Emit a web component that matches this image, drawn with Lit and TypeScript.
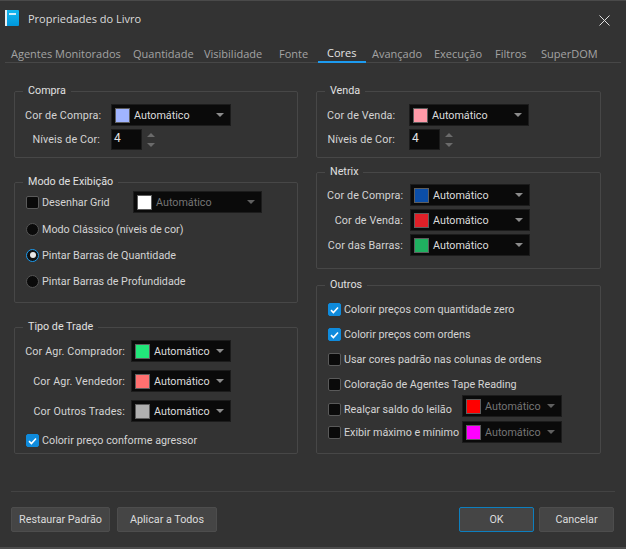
import { LitElement, html, css } from "lit";
import { customElement } from "lit/decorators.js";

const TABS: [string, number, number][] = [
  ["Agentes Monitorados", 122, 6],
  ["Quantidade", 70, 6],
  ["Visibilidade", 72, 7],
  ["Fonte", 49, 10],
  ["Cores", 48, 9],
  ["Avançado", 62, 6],
  ["Execução", 61, 6],
  ["Filtros", 46, 6],
  ["SuperDOM", 70, 6],
];

@customElement("app-root")
export class AppRoot extends LitElement {
  static styles = css`
    :host {
      display: block;
      width: 626px;
      height: 549px;
      box-sizing: border-box;
      background: #333333;
      border-top: 1px solid #4a4a4a;
      border-bottom: 2px solid #4c4c4c;
      font-family: Roboto, "Noto Sans", sans-serif;
      font-size: 10.75px;
      color: #d4d4d4;
      overflow: hidden;
    }
    * { box-sizing: border-box; }
    .titlebar { display: flex; align-items: center; height: 34px; padding: 0 16px 0 5px; font-family: "Open Sans", sans-serif; font-size: 11px; }
    .title { margin-left: 9px; flex: 1; color: #dcdcdc; }
    .close { display: block; margin-top: 4px; }
    .tabs { display: flex; height: 28px; margin: 0 5px; border-bottom: 1px solid #474747; padding-top: 10px; font-family: "Open Sans", sans-serif; font-size: 11px; }
    .tab { color: #a3a3a3; height: 18px; line-height: 18px; white-space: nowrap; }
    .tab.active { color: #e4e4e4; border-bottom: 2px solid #1d9bf0; line-height: 16px; }
    .body { display: flex; gap: 18px; padding: 20px 0 0 14px; height: 428px; }
    .col { display: flex; flex-direction: column; }
    .left { width: 284px; gap: 16px; }
    .right { width: 285px; }
    fieldset { margin: 0; padding: 0 10px; border: 1px solid #474747; border-radius: 2px; min-width: 0; }
    legend { margin-left: -2px; padding: 0 5px; line-height: 16px; height: 16px; color: #e0e0e0; }
    .compra { height: 75px; }
    .modo { height: 129px; }
    .tipo { height: 135px; }
    .netrix { height: 105px; margin-top: 6px; }
    .outros { height: 177px; margin-top: 8px; }
    .form { display: grid; align-items: center; padding-top: 5px; row-gap: 3px; column-gap: 11px; }
    .form.f75 { grid-template-columns: 75px auto; justify-content: start; }
    .form.f70 { grid-template-columns: 68px auto; justify-content: start; column-gap: 14px; }
    .form.tipo-f { grid-template-columns: 100px auto; justify-content: start; column-gap: 6px; row-gap: 8px; padding-top: 5px; }
    .form.netrix-f { grid-template-columns: 76px auto; justify-content: start; column-gap: 7px; padding-top: 4px; }
    .lbl { text-align: right; white-space: nowrap; letter-spacing: 0.13px; }
    .dd { display: flex; align-items: center; width: 120px; height: 22px; background: #0a0a0a; border: 1px solid #1c1c1c; padding-left: 3px; padding-right: 6px; }
    .dd.w100 { width: 100px; }
    .dd.w129 { width: 129px; }
    .swatch { width: 15px; height: 15px; border: 1px solid #5e5e5e; flex: none; margin-right: 4px; }
    .dd-text { flex: 1; color: #dcdcdc; white-space: nowrap; }
    .dd.off .dd-text { color: #757575; }
    .arrow { width: 0; height: 0; border-left: 4px solid transparent; border-right: 4px solid transparent; border-top: 4px solid #8c8c8c; }
    .dd.off .arrow { border-top-color: #5f5f5f; }
    .spin { display: flex; align-items: center; gap: 2px; }
    .spin-in { width: 31px; height: 21px; background: #0a0a0a; border: 1px solid #1c1c1c; padding-left: 2px; line-height: 17px; font-size: 12px; color: #e4e4e4; }
    .spin-btns { width: 14px; height: 21px; display: flex; flex-direction: column; align-items: center; justify-content: center; gap: 6px; }
    .up, .down { width: 0; height: 0; border-left: 4px solid transparent; border-right: 4px solid transparent; }
    .up { border-bottom: 4px solid #6b6b6b; }
    .down { border-top: 4px solid #6b6b6b; }
    .opt { display: flex; align-items: center; gap: 3px; white-space: nowrap; }
    .box { width: 13px; height: 13px; flex: none; margin-left: 1px; background: #0a0a0a; border: 1px solid #5a5a5a; border-radius: 2px; display: flex; align-items: center; justify-content: center; }
    .box.on { background: #0f8bdc; border-color: #0f8bdc; }
    .radio { width: 13px; height: 13px; flex: none; margin-left: 1px; background: #0a0a0a; border: 1px solid #555; border-radius: 50%; display: flex; align-items: center; justify-content: center; }
    .radio.on { border: 1.5px solid #1c9cf0; background: #111; }
    .radio.on::after { content: ""; width: 6px; height: 6px; border-radius: 50%; background: #e6e6e6; }
    .modo-list { display: flex; flex-direction: column; }
    .grid-row { display: flex; align-items: center; height: 22px; margin-top: 1px; }
    .grid-row .opt { width: 108px; }
    .modo-list > .opt { height: 26px; }
    .spacer { height: 3px; }
    .tipo .opt { margin-top: 12px; }
    .outros-list { display: flex; flex-direction: column; padding-top: 4px; }
    .outros-list > .opt { height: 25px; }
    .outros-list > .opt.r5 { height: 24px; }
    .outros-list > .opt.r5 .dd { margin-bottom: 6px; }
    .outros-list > .opt.r6 { height: 22px; }
    .outros-list .txt { width: 115px; }
    .outros-list .long .txt { width: auto; }
    .footer { margin: 0 11px; border-top: 1px solid #434343; padding: 15px 1px 0 0; display: flex; gap: 7px; }
    .btn { height: 25px; background: #454545; border: 1px solid #4d4d4d; border-radius: 2px; color: #dcdcdc; display: flex; align-items: center; justify-content: center; }
    .b1 { width: 99px; }
    .b2 { width: 100px; }
    .ok { width: 75px; margin-left: auto; border-color: #0d7fbf; margin-right: -2px; }
    .cancel { width: 75px; }
  `;

  private dd(color: string, cls = "") {
    return html`<div class="dd ${cls}">
      <span class="swatch" style="background:${color}"></span>
      <span class="dd-text">Automático</span>
      <span class="arrow"></span>
    </div>`;
  }

  private check(on: boolean, label: string, cls = "") {
    return html`<div class="opt ${cls}">
      <span class="box ${on ? "on" : ""}">
        ${on
          ? html`<svg width="9" height="8" viewBox="0 0 9 8"><path d="M1 4.2 3.4 6.5 8 1.5" fill="none" stroke="#fff" stroke-width="1.6"/></svg>`
          : ""}
      </span>
      <span class="txt">${label}</span>
    </div>`;
  }

  private radio(on: boolean, label: string) {
    return html`<div class="opt"><span class="radio ${on ? "on" : ""}"></span><span>${label}</span></div>`;
  }

  private spin() {
    return html`<div class="spin">
      <div class="spin-in">4</div>
      <div class="spin-btns"><span class="up"></span><span class="down"></span></div>
    </div>`;
  }

  render() {
    return html`
      <div class="titlebar">
        <svg width="14" height="16" viewBox="0 0 14 16">
          <defs>
            <linearGradient id="bk" x1="0" y1="0" x2="0" y2="1">
              <stop offset="0" stop-color="#12b8f0" />
              <stop offset="1" stop-color="#0097dc" />
            </linearGradient>
          </defs>
          <rect x="0" y="0" width="2" height="16" fill="#e8eef2" />
          <path d="M2 0h11a1 1 0 0 1 1 1v14a1 1 0 0 1-1 1H2z" fill="url(#bk)" />
          <rect x="4" y="3" width="7" height="2" fill="#cfeefb" />
        </svg>
        <span class="title">Propriedades do Livro</span>
        <svg class="close" width="11" height="11" viewBox="0 0 11 11">
          <path d="M.5.5l10 10M10.5.5l-10 10" stroke="#e0e0e0" stroke-width="1" fill="none" />
        </svg>
      </div>
      <div class="tabs">
        ${TABS.map(
          ([t, w, p]) =>
            html`<div class="tab ${t === "Cores" ? "active" : ""}" style="width:${w}px;padding-left:${p}px">${t}</div>`
        )}
      </div>
      <div class="body">
        <div class="col left">
          <fieldset class="compra">
            <legend>Compra</legend>
            <div class="form f75">
              <span class="lbl">Cor de Compra:</span>${this.dd("#a0b4ff")}
              <span class="lbl">Níveis de Cor:</span>${this.spin()}
            </div>
          </fieldset>
          <fieldset class="modo">
            <legend>Modo de Exibição</legend>
            <div class="modo-list">
              <div class="grid-row">
                ${this.check(false, "Desenhar Grid")}${this.dd("#ffffff", "off w129")}
              </div>
              <div class="spacer"></div>
              ${this.radio(false, "Modo Clássico (níveis de cor)")}
              ${this.radio(true, "Pintar Barras de Quantidade")}
              ${this.radio(false, "Pintar Barras de Profundidade")}
            </div>
          </fieldset>
          <fieldset class="tipo">
            <legend>Tipo de Trade</legend>
            <div class="form tipo-f">
              <span class="lbl">Cor Agr. Comprador:</span>${this.dd("#22e67a", "w100")}
              <span class="lbl">Cor Agr. Vendedor:</span>${this.dd("#ff7070", "w100")}
              <span class="lbl">Cor Outros Trades:</span>${this.dd("#b0b0b0", "w100")}
            </div>
            ${this.check(true, "Colorir preço conforme agressor")}
          </fieldset>
        </div>
        <div class="col right">
          <fieldset class="compra">
            <legend>Venda</legend>
            <div class="form f70">
              <span class="lbl">Cor de Venda:</span>${this.dd("#ff9aa8")}
              <span class="lbl">Níveis de Cor:</span>${this.spin()}
            </div>
          </fieldset>
          <fieldset class="netrix">
            <legend>Netrix</legend>
            <div class="form netrix-f">
              <span class="lbl">Cor de Compra:</span>${this.dd("#0b4ea8")}
              <span class="lbl">Cor de Venda:</span>${this.dd("#e02028")}
              <span class="lbl">Cor das Barras:</span>${this.dd("#1fb060")}
            </div>
          </fieldset>
          <fieldset class="outros">
            <legend>Outros</legend>
            <div class="outros-list">
              ${this.check(true, "Colorir preços com quantidade zero", "long")}
              ${this.check(true, "Colorir preços com ordens", "long")}
              ${this.check(false, "Usar cores padrão nas colunas de ordens", "long")}
              ${this.check(false, "Coloração de Agentes Tape Reading", "long")}
              <div class="opt r5">
                <span class="box"></span><span class="txt">Realçar saldo do leilão</span>${this.dd("#ff0000", "off w100")}
              </div>
              <div class="opt r6">
                <span class="box"></span><span class="txt">Exibir máximo e mínimo</span>${this.dd("#ff00ff", "off w100")}
              </div>
            </div>
          </fieldset>
        </div>
      </div>
      <div class="footer">
        <div class="btn b1">Restaurar Padrão</div>
        <div class="btn b2">Aplicar a Todos</div>
        <div class="btn ok">OK</div>
        <div class="btn cancel">Cancelar</div>
      </div>
    `;
  }
}
